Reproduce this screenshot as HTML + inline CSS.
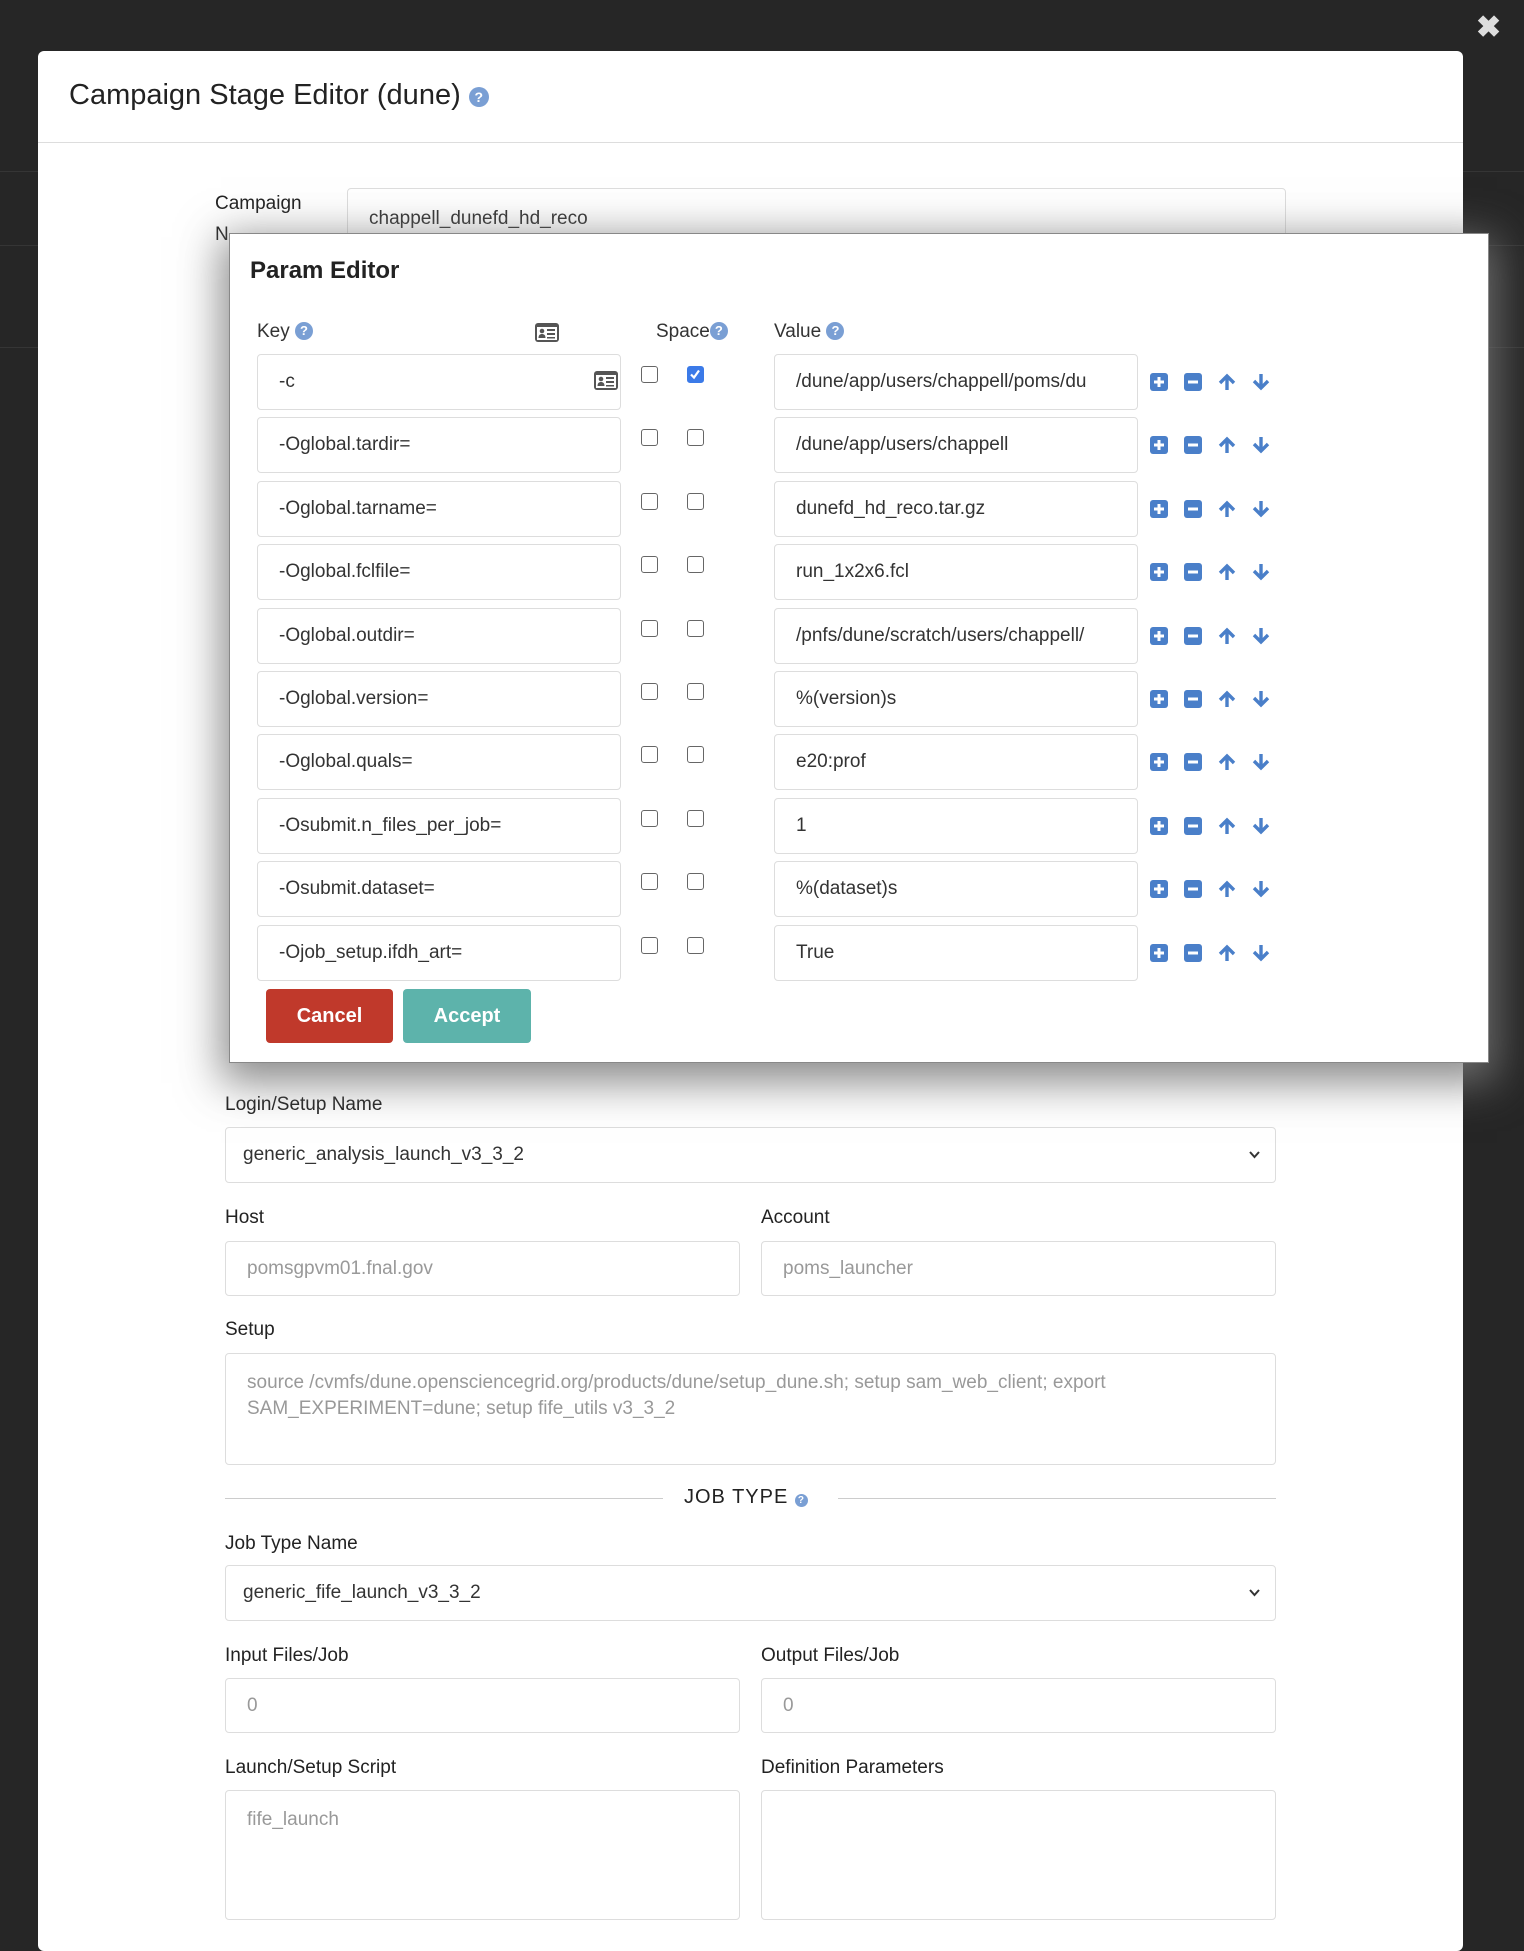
<!DOCTYPE html>
<html><head><meta charset="utf-8">
<style>
*{box-sizing:border-box;margin:0;padding:0}
body{width:1524px;height:1891px;background:#262626;font-family:"Liberation Sans",sans-serif;color:#333;position:relative;overflow:hidden}
.a{position:absolute}
.bl{position:absolute;height:1px;background:#353535;left:0;width:1524px}
.modal{position:absolute;left:38px;top:51px;width:1425px;height:1900px;background:#fff;border-radius:6px}
.inp{position:absolute;border:1px solid #ddd;border-radius:4px;background:#fff;font-size:19px;color:#333;padding-left:21px;display:flex;align-items:center}
.dis{color:#999}
.lbl{position:absolute;font-size:19px;color:#222}
.cb{position:absolute;width:17px;height:17px;border:1.5px solid #666;border-radius:3px;background:#fff}
.cb.on{background:#3b7ae8;border-color:#3b7ae8}
.q{display:inline-block;width:18px;height:18px;border-radius:50%;background:#7a9fd4;color:#fff;font-size:13px;font-weight:bold;text-align:center;line-height:18px;vertical-align:2px}
.ic{position:absolute}
.btn{position:absolute;height:54px;border-radius:4px;color:#fff;font-size:20px;font-weight:bold;display:flex;align-items:center;justify-content:center}
.chev{position:absolute;right:14px;top:50%;margin-top:-6px}
</style></head><body>
<div class="bl" style="top:171px"></div><div class="bl" style="top:245px"></div><div class="bl" style="top:347px"></div>
<div class="a" style="left:1476px;top:10px;color:#ddd;font-size:30px;font-weight:bold">✖</div>
<div class="modal"></div>
<div class="a" style="left:69px;top:79px;font-size:29px;color:#222">Campaign Stage Editor (dune) <span class="q" style="width:20px;height:20px;line-height:20px;font-size:14px">?</span></div>
<div class="a" style="left:38px;top:142px;width:1425px;height:1px;background:#ddd"></div>
<div class="lbl" style="left:215px;top:193px">Campaign</div>
<div class="lbl" style="left:215px;top:224px">N</div>
<div class="inp" style="left:347px;top:188px;width:939px;height:56px;align-items:flex-start;padding-top:19px">chappell_dunefd_hd_reco</div>

<div class="lbl" style="left:225px;top:1094px;font-size:19px">Login/Setup Name</div>
<div class="inp" style="left:225px;top:1127px;width:1051px;height:56px;padding-left:17px">generic_analysis_launch_v3_3_2<svg class="chev" width="13" height="12" viewBox="0 0 13 12"><path d="M2 3l4.5 5L11 3" stroke="#333" stroke-width="2" fill="none"/></svg></div>
<div class="lbl" style="left:225px;top:1207px">Host</div>
<div class="lbl" style="left:761px;top:1207px">Account</div>
<div class="inp dis" style="left:225px;top:1241px;width:515px;height:55px">pomsgpvm01.fnal.gov</div>
<div class="inp dis" style="left:761px;top:1241px;width:515px;height:55px">poms_launcher</div>
<div class="lbl" style="left:225px;top:1319px">Setup</div>
<div class="inp dis" style="left:225px;top:1353px;width:1051px;height:112px;align-items:flex-start;padding-top:16px;line-height:26px;padding-right:60px">source /cvmfs/dune.opensciencegrid.org/products/dune/setup_dune.sh; setup sam_web_client; export SAM_EXPERIMENT=dune; setup fife_utils v3_3_2</div>
<div class="a" style="left:225px;top:1498px;width:438px;height:1px;background:#ccc"></div>
<div class="a" style="left:838px;top:1498px;width:438px;height:1px;background:#ccc"></div>
<div class="a" style="left:684px;top:1486px;font-size:20px;letter-spacing:1px;color:#222">JOB TYPE <span class="q" style="width:13px;height:13px;line-height:13px;font-size:10px;vertical-align:0">?</span></div>
<div class="lbl" style="left:225px;top:1533px">Job Type Name</div>
<div class="inp" style="left:225px;top:1565px;width:1051px;height:56px;padding-left:17px">generic_fife_launch_v3_3_2<svg class="chev" width="13" height="12" viewBox="0 0 13 12"><path d="M2 3l4.5 5L11 3" stroke="#333" stroke-width="2" fill="none"/></svg></div>
<div class="lbl" style="left:225px;top:1645px">Input Files/Job</div>
<div class="lbl" style="left:761px;top:1645px">Output Files/Job</div>
<div class="inp dis" style="left:225px;top:1678px;width:515px;height:55px">0</div>
<div class="inp dis" style="left:761px;top:1678px;width:515px;height:55px">0</div>
<div class="lbl" style="left:225px;top:1757px">Launch/Setup Script</div>
<div class="lbl" style="left:761px;top:1757px">Definition Parameters</div>
<div class="inp dis" style="left:225px;top:1790px;width:515px;height:130px;align-items:flex-start;padding-top:18px">fife_launch</div>
<div class="inp" style="left:761px;top:1790px;width:515px;height:130px"></div>

<div class="a" style="left:229px;top:233px;width:1260px;height:830px;background:#fff;border:1px solid #888;box-shadow:0 12px 40px 8px rgba(120,120,120,0.85)"></div>
<div class="a" style="left:250px;top:257px;font-size:24px;font-weight:bold;color:#222">Param Editor</div>
<div class="a" style="left:257px;top:321px;font-size:19px">Key <span class="q">?</span></div>
<svg class="ic" style="left:535px;top:323px" width="24" height="19" viewBox="0 0 24 19"><rect x="0" y="0" width="24" height="19" rx="3" fill="#555"/><rect x="2" y="4" width="20" height="13" fill="#fff"/><circle cx="7" cy="8" r="2.3" fill="#555"/><path d="M3.5 15c0-3 1.5-4 3.5-4s3.5 1 3.5 4z" fill="#555"/><rect x="12" y="6" width="8" height="2" fill="#555"/><rect x="12" y="10" width="8" height="2" fill="#555"/><rect x="12" y="14" width="8" height="1.5" fill="#555"/></svg>
<div class="a" style="left:656px;top:321px;font-size:19px">Space<span class="q">?</span></div>
<div class="a" style="left:774px;top:321px;font-size:19px">Value <span class="q">?</span></div>

<div id="rows"></div>
<script>
var keys=["-c","-Oglobal.tardir=","-Oglobal.tarname=","-Oglobal.fclfile=","-Oglobal.outdir=","-Oglobal.version=","-Oglobal.quals=","-Osubmit.n_files_per_job=","-Osubmit.dataset=","-Ojob_setup.ifdh_art="];
var vals=["/dune/app/users/chappell/poms/du","/dune/app/users/chappell","dunefd_hd_reco.tar.gz","run_1x2x6.fcl","/pnfs/dune/scratch/users/chappell/","%(version)s","e20:prof","1","%(dataset)s","True"];
var h="";
for(var i=0;i<10;i++){var t=354+i*63.4;
h+='<div class="inp" style="left:257px;top:'+t+'px;width:364px;height:56px">'+keys[i]+'</div>';
if(i==0)h+='<svg class="ic" style="left:594px;top:'+(t+17)+'px" width="24" height="19" viewBox="0 0 24 19"><rect x="0" y="0" width="24" height="19" rx="3" fill="#555"/><rect x="2" y="4" width="20" height="13" fill="#fff"/><circle cx="7" cy="8" r="2.3" fill="#555"/><path d="M3.5 15c0-3 1.5-4 3.5-4s3.5 1 3.5 4z" fill="#555"/><rect x="12" y="6" width="8" height="2" fill="#555"/><rect x="12" y="10" width="8" height="2" fill="#555"/><rect x="12" y="14" width="8" height="1.5" fill="#555"/></svg>';
h+='<div class="cb" style="left:641px;top:'+(t+12)+'px"></div>';
h+='<div class="cb'+(i==0?' on':'')+'" style="left:687px;top:'+(t+12)+'px">'+(i==0?'<svg width="14" height="14" viewBox="0 0 14 14" style="position:absolute;left:0;top:0"><path d="M3 7.5l3 3 5-7" stroke="#fff" stroke-width="2.2" fill="none"/></svg>':'')+'</div>';
h+='<div class="inp" style="left:774px;top:'+t+'px;width:364px;height:56px;overflow:hidden;white-space:nowrap">'+vals[i]+'</div>';
var c=t+28;
h+='<svg class="ic" style="left:1150px;top:'+(c-10)+'px" width="130" height="20" viewBox="0 0 130 20"><rect x="0" y="1" width="18" height="18" rx="3" fill="#4a7fc9"/><path d="M9 5v10M4 10h10" stroke="#fff" stroke-width="3"/><rect x="34" y="1" width="18" height="18" rx="3" fill="#4a7fc9"/><path d="M38 10h10" stroke="#fff" stroke-width="3"/><path d="M77 18V5M70 11l7-7 7 7" stroke="#4a7fc9" stroke-width="3.4" fill="none"/><path d="M111 2v13M104 9l7 7 7-7" stroke="#4a7fc9" stroke-width="3.4" fill="none"/></svg>';
}
document.getElementById("rows").innerHTML=h;
</script>
<div class="btn" style="left:266px;top:989px;width:127px;background:#c0392b">Cancel</div>
<div class="btn" style="left:403px;top:989px;width:128px;background:#5db3ab">Accept</div>
</body></html>
